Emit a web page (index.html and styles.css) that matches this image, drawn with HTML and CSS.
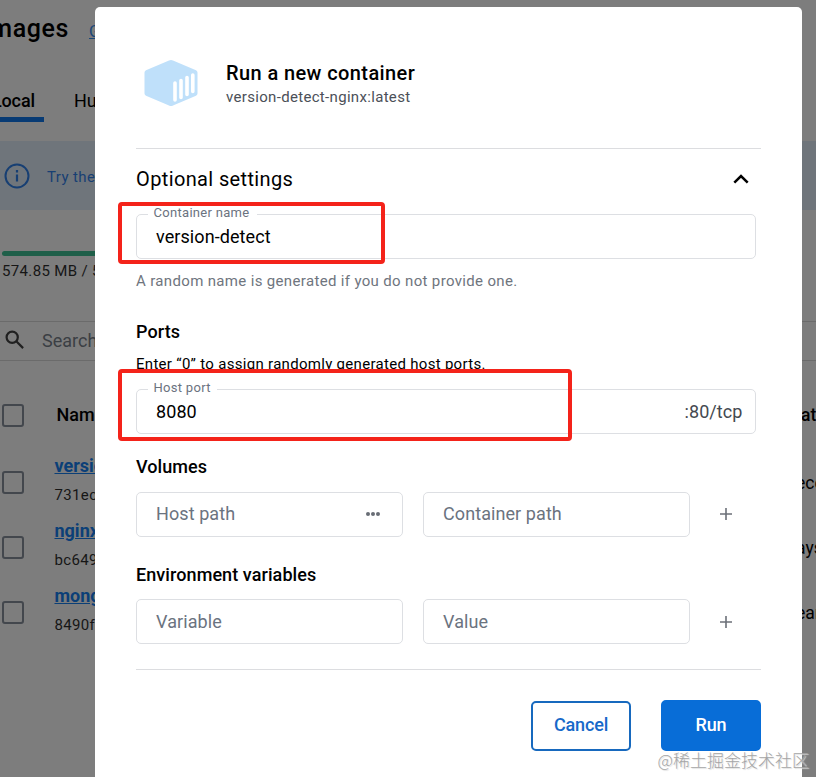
FILE: index.html
```html
<!DOCTYPE html>
<html lang="en">
<head>
<meta charset="utf-8">
<title>Run a new container</title>
<link rel="stylesheet" href="styles.css">
</head>
<body>
<div class="page">
  <header class="page-head"><h1>Images</h1><a class="feedback">Give feedback</a></header>
  <nav class="tabs"><span class="tab active"><b>Local</b></span><span class="tab">Hub</span></nav>
  <div class="banner">
    <svg width="26" height="26" viewBox="0 0 26 26" fill="none" stroke="currentColor"><circle cx="13" cy="13" r="11.5" stroke-width="2"/><path d="M13 11.5v7M13 7v2.4" stroke-width="2.2"/></svg>
    <span>Try the</span>
  </div>
  <div class="usage"><div class="bar"></div><span>574.85 MB / 5</span></div>
  <div class="search">
    <svg width="20" height="20" viewBox="0 0 20 20" fill="none" stroke="currentColor" stroke-width="2.2"><circle cx="7.2" cy="7.2" r="5.6"/><path d="M11.3 11.3l6.8 6.8"/></svg>
    <span>Search</span>
  </div>
  <div class="row head"><i class="check"></i><div class="cell"><span class="col">Name</span></div><span class="created">at</span></div>
  <div class="row"><i class="check"></i><div class="cell"><a>version</a><span>731ec</span></div><span class="created">ece</span></div>
  <div class="row"><i class="check"></i><div class="cell"><a>nginx</a><span>bc649</span></div><span class="created">ays</span></div>
  <div class="row"><i class="check"></i><div class="cell"><a>mongo</a><span>8490f</span></div><span class="created">ear</span></div>
</div>

<main class="modal">
  <header class="title">
    <svg width="54" height="48" viewBox="0 0 54 48"><path d="M25 1.400Q27 .4 29 1.400L52 11.200Q53.500 12 53.500 13.500V34.500Q53.500 36 52 36.800L29 46.600Q27 47.600 25 46.600L2 36.800Q.5 36 .5 34.500V13.500Q.5 12 2 11.200Z" fill="#bfe0fa"/><path d="M31 24v17M37 21.500v17M43 18.500v17M48.800 16v16.500" stroke="#fff" stroke-width="3.600" stroke-linecap="round"/></svg>
    <div><h2>Run a new container</h2><p>version-detect-nginx:latest</p></div>
  </header>
  <section class="settings">
    <div class="toggle"><span>Optional settings</span>
      <svg width="16" height="10" viewBox="0 0 16 10" fill="none" stroke="#000" stroke-width="2.500"><path d="M1.300 8.700L8 2l6.700 6.700"/></svg></div>
    <div class="field wide"><label class="w1">Container name</label><span class="value">version-detect</span></div>
    <p class="help">A random name is generated if you do not provide one.</p>
    <h3 class="ports">Ports</h3>
    <p class="hint">Enter “0” to assign randomly generated host ports.</p>
    <div class="field wide"><label class="w2">Host port</label><span class="value">8080</span><span class="suffix">:80/tcp</span></div>
    <h3 class="volumes">Volumes</h3>
    <div class="pair">
      <div class="field"><span>Host path</span><svg width="16" height="6" viewBox="0 0 16 6" fill="#686d75"><circle cx="3" cy="3" r="2"/><circle cx="8" cy="3" r="2"/><circle cx="13" cy="3" r="2"/></svg></div>
      <div class="field"><span>Container path</span></div>
      <svg class="plus raised" width="12" height="12" viewBox="0 0 12 12"><path d="M6 0v12M0 6h12" stroke="#6c7078" stroke-width="1.600"/></svg>
    </div>
    <h3 class="env">Environment variables</h3>
    <div class="pair low">
      <div class="field"><span>Variable</span></div>
      <div class="field"><span>Value</span></div>
      <svg class="plus" width="12" height="12" viewBox="0 0 12 12"><path d="M6 0v12M0 6h12" stroke="#6c7078" stroke-width="1.600"/></svg>
    </div>
  </section>
  <footer class="actions"><button class="cancel">Cancel</button><button class="run">Run</button></footer>
</main>
<div class="mark mark-name"></div>
<div class="mark mark-port"></div>
<div class="watermark">@稀土掘金技术社区</div>
</body>
</html>
```
FILE: styles.css
```css
* { box-sizing: border-box; }
body { margin: 0; width: 816px; height: 777px; overflow: hidden; position: relative; background: #7d7d7d; font-family: Roboto, "Liberation Sans", sans-serif; color: #000; }
h1, h2, h3, p { margin: 0; font-weight: 500; }
svg { display: block; flex: none; }

.page { height: 777px; overflow: hidden; white-space: nowrap; }
.page-head { display: flex; align-items: center; height: 57px; margin-left: -8px; gap: 20px; }
.page-head h1 { width: 77px; display: flex; justify-content: flex-end; font-size: 25px; letter-spacing: .6px; }
.feedback { font-size: 16px; color: #1a4678; text-decoration: underline; padding-top: 6px; }
.tabs { display: flex; height: 65px; padding-top: 22px; font-size: 18px; }
.tab { height: 43px; line-height: 44px; }
.tab.active { width: 44px; margin-right: 30px; padding-right: 9px; border-bottom: 5px solid #083b74; display: flex; justify-content: flex-end; }
.tab b { font-weight: 500; letter-spacing: -.1px; }
.banner { display: flex; align-items: center; gap: 17px; height: 69px; margin-top: 19px; padding-left: 4px; background: #6f757b; color: #173f73; font-size: 15px; letter-spacing: .4px; }
.banner span { padding-top: 2px; }
.usage { margin-top: 41px; padding-left: 2px; height: 70px; font-size: 15px; letter-spacing: .35px; color: #161616; }
.bar { width: 780px; height: 5px; border-radius: 3px; background: #1f5f49; margin-bottom: 6px; }
.search { height: 40px; border-top: 1px solid #6b6b6b; border-bottom: 1px solid #6b6b6b; display: flex; align-items: center; padding: 0 0 2px 5px; gap: 17px; color: #3b3f44; font-size: 18px; margin-bottom: 20px; }
.search svg { color: #202020; }
.row { display: flex; height: 65px; align-items: center; }
.row.head { height: 69px; }
.check { flex: none; width: 22px; height: 23px; margin-left: 2px; border: 2px solid #43474d; border-radius: 3px; }
.cell { flex: none; width: 772px; padding: 0 0 6px 30.500px; display: flex; flex-direction: column; gap: 10px; font-size: 15px; letter-spacing: .35px; color: #161616; }
.cell a { font-size: 18px; line-height: 21px; font-weight: 700; color: #0b3f77; text-decoration: underline; letter-spacing: 0; }
.cell span { line-height: 18px; }
.cell .col { font-size: 18px; font-weight: 500; padding-left: 2px; color: #000; letter-spacing: 0; }
.created { font-size: 17.500px; }
.head .cell { width: 777px; padding-bottom: 2px; }
.head .created { font-weight: 500; padding-bottom: 2px; }

.modal { position: absolute; left: 95px; top: 7px; width: 707px; height: 780px; padding: 0 41px; background: #fff; border-radius: 5px; }
.title { height: 142px; border-bottom: 1px solid #dcdde0; display: flex; padding: 52px 0 0 8px; gap: 28px; }
.title h2 { font-size: 20px; line-height: 26px; margin-top: 1px; letter-spacing: .4px; }
.title p { font-size: 15px; line-height: 22px; font-weight: 400; color: #4b5058; letter-spacing: .32px; }
.settings { height: 521px; border-bottom: 1px solid #dcdde0; }
.toggle { height: 65px; padding: 0 12px 5px 0; display: flex; justify-content: space-between; align-items: center; font-size: 20px; letter-spacing: .37px; }
.field { height: 45px; width: 267px; border: 1px solid #dddfe3; border-radius: 5px; display: flex; align-items: center; justify-content: space-between; padding: 0 21px 2px 19px; font-size: 18px; letter-spacing: .08px; color: #6b737f; position: relative; }
.field.wide { width: 620px; padding: 0 12.500px 0 19px; }
.pair.low .field { padding-bottom: 0; }
.field label { position: absolute; left: 11px; top: -11px; height: 18px; line-height: 18px; padding-left: 5.500px; background: #fff; font-size: 13px; letter-spacing: .3px; }
.w1 { width: 109px; }
.w2 { width: 69px; }
.value { color: #000; }
.suffix { color: #444950; }
.help { font-size: 15px; line-height: 20px; font-weight: 400; color: #6f757e; margin-top: 12px; letter-spacing: .34px; }
h3 { font-size: 18px; line-height: 22px; letter-spacing: .08px; }
.ports { margin-top: 30px; }
.hint { font-size: 15px; line-height: 20px; font-weight: 400; margin: 11px 0 15px; letter-spacing: .3px; }
.volumes { margin: 22px 0 14px; }
.env { margin: 27px 0 13px; }
.pair { display: flex; align-items: center; gap: 20px; }
.plus { margin-left: 10px; }
.plus.raised { margin-bottom: 2px; }
.actions { display: flex; justify-content: flex-end; align-items: flex-end; gap: 30px; padding-top: 30px; }
button { width: 100px; height: 50px; border-radius: 5px; border: 2px solid #1769be; background: #fff; color: #1769c9; font: 500 18px Roboto, sans-serif; letter-spacing: -.15px; padding: 0 0 3px; }
.run { height: 51px; color: #fff; background: #086dd7; border-color: #086dd7; padding-bottom: 2px; }

.mark { position: absolute; left: 118px; border: 4px solid #f4231a; border-radius: 4px; }
.mark-name { top: 202px; width: 267px; height: 62px; }
.mark-port { top: 369px; width: 454px; height: 72px; }
.watermark { position: absolute; right: 7px; top: 748px; font: 300 17px/24px "Noto Sans CJK SC", sans-serif; color: #a5a5a5; white-space: nowrap; text-shadow: 1px 1px 1px #ddd; }
```
